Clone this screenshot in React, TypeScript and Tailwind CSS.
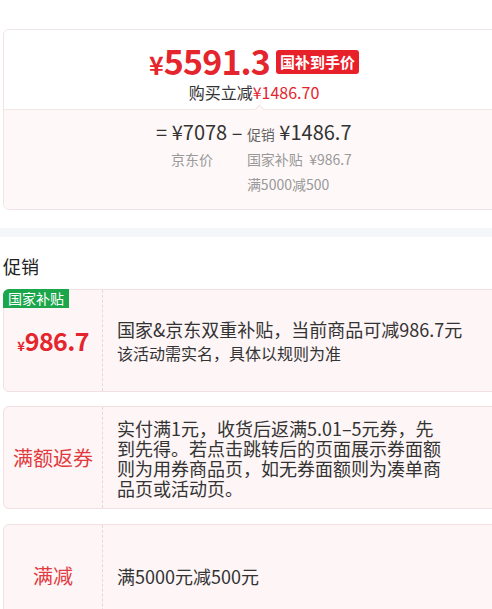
import React from 'react';

const font = { fontFamily: '"Noto Sans CJK SC", "Noto Sans", sans-serif' };

interface PromoCardProps {
  left: React.ReactNode;
  badge?: string;
  children: React.ReactNode;
  className?: string;
}

const PromoCard: React.FC<PromoCardProps> = ({ left, badge, children, className }) => {
  return (
    <div className={`relative ml-[3px] w-[502px] h-[103px] flex rounded-md border border-[#f2e0e2] bg-[#fdf5f6] ${className || ''}`}>
      {badge && (
        <span className="absolute -left-px -top-px h-[19px] px-[5px] rounded-tl-md bg-[#1ba64c] text-white text-[14px] leading-[19px]">
          {badge}
        </span>
      )}
      <div className="w-[99px] shrink-0 flex items-center justify-center border-r border-dashed border-[#e9d6d8]">
        {left}
      </div>
      <div className="flex-1 flex flex-col justify-center pl-[14px] text-[#333]">
        {children}
      </div>
    </div>
  );
};

export default function App() {
  return (
    <div className="w-[492px] min-h-[609px] overflow-x-hidden bg-white" style={font}>
      {/* price card */}
      <div className="pt-[29px]">
        <div className="ml-[3px] w-[502px] rounded-md border border-[#efe5e6] overflow-hidden">
          <div className="relative flex flex-col items-center pt-[11px] pb-[6px] bg-white">
            <div className="flex items-baseline h-[40px] text-[#e4252d] font-bold">
              <span className="text-[25px] leading-[40px]">¥</span>
              <span className="text-[34px] leading-[40px] tracking-tight">5591.3</span>
              <span className="self-center ml-[6px] mt-[2px] h-[24px] px-[4px] rounded-[3px] bg-[#e8202a] text-white text-[15px] leading-[24px]">
                国补到手价
              </span>
            </div>
            <div className="h-[22px] text-[16px] leading-[22px] text-[#333]">
              购买立减<span className="text-[#e4252d]">¥1486.70</span>
            </div>
            <span className="absolute left-[252px] -bottom-[4px] w-[7px] h-[7px] rotate-45 bg-[#fef8f8] border-l border-t border-[#f3e6e7]" />
          </div>
          <div className="flex justify-center bg-[#fef8f8] border-t border-[#f3e6e7] pt-[8px] pb-[13px]">
            <div className="flex flex-col">
              <div className="h-[28px] text-[20px] leading-[28px] text-[#333] whitespace-pre">= ¥7078 – </div>
              <div className="pl-[15px] h-[24px] mt-[1px] text-[14px] leading-[24px] text-[#999]">京东价</div>
            </div>
            <div className="flex flex-col">
              <div className="h-[28px] text-[20px] leading-[28px] text-[#333]">
                <span className="text-[14px] text-[#666]">促销</span> ¥1486.7
              </div>
              <div className="h-[24px] mt-[1px] text-[14px] leading-[24px] text-[#999] whitespace-pre">国家补贴  ¥986.7</div>
              <div className="h-[24px] mt-[1px] text-[14px] leading-[24px] text-[#999]">满5000减500</div>
            </div>
          </div>
        </div>
      </div>

      <div className="mt-[18px] h-[9px] bg-[#f5f6fa]" />

      <div className="mt-[19px] mb-[13px] pl-[3px] h-[20px] text-[18px] leading-[20px] text-[#222]">促销</div>

      <PromoCard
        badge="国家补贴"
        left={
          <span className="text-[#e4252d] font-bold">
            <span className="text-[13px]">¥</span>
            <span className="text-[25px] tracking-tight">986.7</span>
          </span>
        }
      >
        <div className="text-[18px] leading-[24px] whitespace-nowrap">国家&amp;京东双重补贴，当前商品可减986.7元</div>
        <div className="text-[16px] leading-[24px]">该活动需实名，具体以规则为准</div>
      </PromoCard>

      <PromoCard className="mt-[14px]" left={<span className="text-[20px] text-[#e23a3f]">满额返券</span>}>
        <div className="w-[334px] text-[18px] leading-[20px]">
          实付满1元，收货后返满5.01–5元券，先到先得。若点击跳转后的页面展示券面额则为用券商品页，如无券面额则为凑单商品页或活动页。
        </div>
      </PromoCard>

      <PromoCard className="mt-[15px]" left={<span className="text-[20px] text-[#e23a3f]">满减</span>}>
        <div className="text-[18px] leading-[24px]">满5000元减500元</div>
      </PromoCard>
    </div>
  );
}
